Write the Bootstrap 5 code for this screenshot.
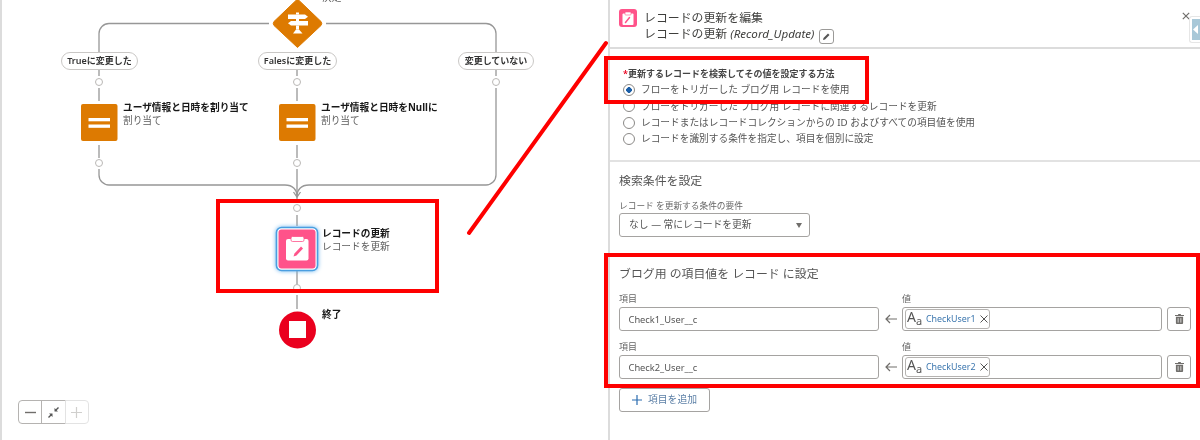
<!DOCTYPE html>
<html lang="ja">
<head>
<meta charset="utf-8">
<title>レコードの更新を編集</title>
<link href="https://cdn.jsdelivr.net/npm/bootstrap@5.3.0/dist/css/bootstrap.min.css" rel="stylesheet">
<style>
html,body{width:1200px;height:440px;overflow:hidden;margin:0;background:#fff}
body{font-family:"Noto Sans","Noto Sans CJK JP",sans-serif;color:#3e3e3c;font-size:9.8px;line-height:1.2}
.page{width:1200px;height:440px;position:relative;filter:blur(.45px)}
.canvas{width:608px;height:440px;position:relative;border-left:2px solid #dcdcdc;flex:none}
.wires{position:absolute;left:-2px;top:0}
.pill{position:absolute;top:52px;height:18px;background:#fff;border:1px solid #c9c7c5;border-radius:9px;font-size:9px;font-weight:600;color:#333;display:flex;align-items:center;justify-content:center;white-space:nowrap}
.nodetext{position:absolute;white-space:nowrap;line-height:13px;font-size:9.7px;color:#5c5c5c}
.nodetext b{display:block;color:#181818;font-weight:700}
.zoombar{position:absolute;left:16px;top:400px;width:71px;height:24px}
.zoombar .btn{width:23.6px;height:24px;padding:0;border-color:#b5b3b1;background:#fff;display:flex;align-items:center;justify-content:center;border-radius:4px}
.zoombar .btn:last-child{border-color:#e3e3e3}
.panel{flex:1;border-left:2px solid #dcdcdc;height:440px;position:relative;min-width:0}
.phead{height:49px;border-bottom:2px solid #dcdcdc;padding:9px 0 0 9px;gap:7px}
.phead .ico{width:18px;height:18px;background:#ff538a;border-radius:3px;flex:none;display:flex;align-items:center;justify-content:center}
.ptitle{font-size:11.9px;line-height:16px;color:#3e3e3c;white-space:nowrap}
.ptitle i{font-size:11.6px}
.editbtn{width:15px;height:15px;padding:0;border:1px solid #9b9a98;border-radius:3px;background:#fff;display:inline-flex;align-items:center;justify-content:center;vertical-align:-3px;margin-left:5px}
.closex{position:absolute;left:572px;top:12px;width:8px;height:8px}
.drawer{position:absolute;left:579px;top:16px;width:13px;height:27px;background:#fff;border:1px solid #e6e6e6;border-right:0;border-radius:3px 0 0 3px;padding:2px 0 2px 2px}
.drawer span{display:flex;height:100%;background:#a8c8d8;align-items:center;padding-left:1px}
.sect1{padding:19px 0 14px 13px;border-bottom:2px solid #e2e2e2;height:113px}
.sect1 .rlabel{font-size:9px;font-weight:600;line-height:12px;color:#444;margin-bottom:2px}
.req{color:#ea001e}
.form-check.rowradio{min-height:0;height:16.3px;padding-left:0;margin:0;display:flex;align-items:center;gap:6px}
.rowradio .form-check-input{float:none;margin:0;width:12px;height:12px;border-color:#8a8886;flex:none}
.rowradio .form-check-input:checked{background-color:#fff;border-color:#8a8886;background-image:radial-gradient(circle,#1b5fa8 0 2.6px,transparent 3px)}
.rowradio .form-check-label{font-size:9.7px;color:#555;white-space:nowrap}
.sect2{padding:10px 9px 0 9px}
.shead{font-size:11.9px;line-height:16px;color:#555}
.slabel{font-size:8.7px;line-height:12px;color:#666;margin:12px 0 1px}
.form-select.picker{width:191px;height:24px;font-size:9.8px;padding:0 0 0 9px;color:#555;border-color:#a5a3a1;border-radius:3px;background-image:linear-gradient(#fff,#fff)}
.pickwrap{position:relative;width:191px}
.pickwrap::after{content:"";position:absolute;left:177px;top:10px;border:3.5px solid transparent;border-top:5px solid #706e6b;border-bottom:0}
.shead.second{margin-top:28px}
.flabel{font-size:9px;line-height:12px;color:#666}
.first-line{margin-top:12px}
.line-gap{margin-top:10px}
.input-gap{margin-top:2px}
.fcell{flex:0 0 260px}
.acell{flex:0 0 23px;display:flex;align-items:center;justify-content:center}
.vcell{flex:1;min-width:0}
.tcell{flex:0 0 24px;margin-left:5px}
.form-control.field{height:24px;font-size:9.3px;padding:0 0 0 8.5px;color:#555;border-color:#a5a3a1;border-radius:3px}
.valbox{height:24px;border:1px solid #a5a3a1;border-radius:3px;padding:1px 0 0 2px;background:#fff}
.chip{height:20px;width:85px;border:1px solid #b5b3b1;border-radius:3px;display:flex;align-items:center;padding-left:1px;background:#fff}
.aa{font-size:14px;color:#555;width:18px;line-height:14px;white-space:nowrap;flex:none}
.aa small{font-size:11px;vertical-align:-3px}
.chip .cname{font-size:8.9px;color:#3b76ae;margin-left:1px;white-space:nowrap}
.chip svg{margin-left:4px;flex:none}
.trashbtn{width:24px;height:24px;padding:0;border-color:#a5a3a1;border-radius:3px;background:#fff;display:flex;align-items:center;justify-content:center}
.addbtn{margin-top:9px;width:91px;height:24px;padding:0;border-color:#a5a3a1;border-radius:3px;background:#fff;font-size:9.8px;color:#5b7fa6;display:flex;align-items:center;justify-content:center;gap:6px}
.redbox{position:absolute;border:4px solid #fe0000;pointer-events:none}
.slash{position:absolute;left:0;top:0;pointer-events:none}
.halo{filter:drop-shadow(0 0 2px #6db5ee)}
</style>
</head>
<body>
<div class="page d-flex">
  <div class="canvas">
    <svg class="wires" width="608" height="440" viewBox="0 0 608 440" fill="none">
      <g stroke="#979797" stroke-width="1.3">
        <path d="M269 23.5H109a10 10 0 0 0-10 10V52M99 70v6M99 88v13M99 145v13M99 169v6a10 10 0 0 0 10 10h176c8 0 12 5 12 11"/>
        <path d="M326 23.5H486a10 10 0 0 1 10 10V52M496 70v6M496 88v87a10 10 0 0 1-10 10H309c-8 0-12 5-12 11"/>
        <path d="M297 70v6M297 88v13M297 145v13M297 169v31M297 215v11M297 271v14M297 295v14"/>
        <path d="M293.500 192l3.500 5 3.500-5"/>
      </g>
      <g fill="#fff" stroke="#b9b7b5" stroke-width="1">
        <circle cx="99" cy="82" r="3.500"/><circle cx="297" cy="82" r="3.500"/><circle cx="496" cy="82" r="3.500"/>
        <circle cx="99" cy="163" r="3.500"/><circle cx="297" cy="163" r="3.500"/>
        <circle cx="297" cy="208" r="3.500"/><circle cx="297" cy="288" r="3.500"/>
      </g>
      <path d="M297.500 -1L321 21.500q1.500 2 0 4L297.500 47.500 274 25.500q-1.500-2 0-4z" fill="#dd7a01" stroke="#dd7a01" stroke-width="1" stroke-linejoin="round"/>
      <g fill="#fff">
        <path d="M288 14.500h17l3 2.200-3 2.200H288z"/>
        <path d="M291 21h17v4.500H291l-3-2.200z"/>
        <rect x="296" y="12.500" width="3" height="2"/><rect x="296" y="19" width="3" height="2"/><rect x="296" y="25.500" width="3" height="4"/>
        <path d="M293 33.500l3-4h3l3.500 4z"/>
      </g>
      <rect x="81" y="104" width="36.500" height="37" rx="2" fill="#dd7a01"/>
      <rect x="88.500" y="118" width="21.500" height="3.300" fill="#fff"/><rect x="88.500" y="124.500" width="21.500" height="3.300" fill="#fff"/>
      <rect x="279" y="104" width="36.500" height="37" rx="2" fill="#dd7a01"/>
      <rect x="286.500" y="118" width="21.500" height="3.300" fill="#fff"/><rect x="286.500" y="124.500" width="21.500" height="3.300" fill="#fff"/>
      <rect class="halo" x="276.500" y="227.500" width="41" height="43" rx="5" fill="#fff" stroke="#4a9ee0" stroke-width="1.600"/>
      <rect x="278.500" y="229.500" width="37" height="39" rx="3" fill="#ff538a"/>
      <rect x="286" y="239" width="22.500" height="21.500" rx="2" fill="#fff"/>
      <rect x="291" y="236.500" width="13" height="5" rx="1.500" fill="#fff" stroke="#ff538a" stroke-width=".8"/>
      <path d="M293.500 256.500l1-3 6.500-7 2 2-6.500 7z" fill="#ff538a"/>
      <ellipse cx="297.500" cy="330" rx="18.500" ry="18.500" fill="#ea001e"/>
      <rect x="289" y="321" width="17" height="17" fill="#fff"/>
    </svg>
    <div class="nodetext" style="left:320px;top:-9px">決定</div>
    <div class="pill" style="left:59px;width:77px">Trueに変更した</div>
    <div class="pill" style="left:256px;width:79px">Falesに変更した</div>
    <div class="pill" style="left:456px;width:76px">変更していない</div>
    <div class="nodetext" style="left:121px;top:101px"><b>ユーザ情報と日時を割り当て</b>割り当て</div>
    <div class="nodetext" style="left:319px;top:101px"><b>ユーザ情報と日時をNullに</b>割り当て</div>
    <div class="nodetext" style="left:320px;top:227px"><b>レコードの更新</b>レコードを更新</div>
    <div class="nodetext" style="left:320px;top:308px"><b>終了</b></div>
    <div class="zoombar btn-group" role="group">
      <button class="btn" type="button"><svg width="11" height="11" viewBox="0 0 11 11"><path d="M0 5.500h11" stroke="#706e6b" stroke-width="1.400"/></svg></button>
      <button class="btn" type="button"><svg width="11" height="11" viewBox="0 0 11 11" fill="#555"><path d="M6.500 1v3.500H10l-1.300-1.300L11 1 10 0 7.800 2.300zM4.500 10V6.500H1l1.300 1.300L0 10l1 1 2.200-2.300z"/></svg></button>
      <button class="btn" type="button"><svg width="11" height="11" viewBox="0 0 11 11"><path d="M0 5.500h11M5.500 0v11" stroke="#d0cfcd" stroke-width="1.200"/></svg></button>
    </div>
  </div>

  <div class="panel">
    <div class="phead d-flex">
      <span class="ico"><svg width="12" height="13" viewBox="0 0 12 13"><rect x=".5" y="1.500" width="11" height="11.500" rx="1" fill="#fff"/><rect x="3" y="0" width="6" height="3" rx=".8" fill="#fff" stroke="#ff538a" stroke-width=".6"/><path d="M3.500 10.500l4-5" stroke="#ff538a" stroke-width="1.500" stroke-linecap="round"/></svg></span>
      <div class="ptitle">レコードの更新を編集<br>レコードの更新 <i>(Record_Update)</i><button class="editbtn" type="button" aria-label="編集"><svg width="9" height="9" viewBox="0 0 9 9"><path d="M1 8l.5-2L6 1.500 7.500 3 3 7.500z" fill="#555"/></svg></button></div>
    </div>
    <svg class="closex" viewBox="0 0 10 10"><path d="M1 1l8 8M9 1l-8 8" stroke="#706e6b" stroke-width="1.500"/></svg>
    <div class="drawer"><span><svg width="5" height="9" viewBox="0 0 5 9"><path d="M5 0v9L0 4.500z" fill="#fff"/></svg></span></div>

    <div class="sect1">
      <div class="rlabel"><span class="req">*</span>更新するレコードを検索してその値を設定する方法</div>
      <div class="form-check rowradio"><input class="form-check-input" type="radio" name="how" id="r1" checked><label class="form-check-label" for="r1">フローをトリガーした ブログ用 レコードを使用</label></div>
      <div class="form-check rowradio"><input class="form-check-input" type="radio" name="how" id="r2"><label class="form-check-label" for="r2">フローをトリガーした ブログ用 レコードに関連するレコードを更新</label></div>
      <div class="form-check rowradio"><input class="form-check-input" type="radio" name="how" id="r3"><label class="form-check-label" for="r3">レコードまたはレコードコレクションからの ID およびすべての項目値を使用</label></div>
      <div class="form-check rowradio"><input class="form-check-input" type="radio" name="how" id="r4"><label class="form-check-label" for="r4">レコードを識別する条件を指定し、項目を個別に設定</label></div>
    </div>

    <div class="sect2">
      <div class="shead">検索条件を設定</div>
      <div class="slabel">レコード を更新する条件の要件</div>
      <div class="pickwrap"><select class="form-select picker" aria-label="条件"><option>なし — 常にレコードを更新</option></select></div>

      <div class="shead second">ブログ用 の項目値を レコード に設定</div>

      <div class="d-flex first-line">
        <div class="fcell"><div class="flabel">項目</div></div><div class="acell"></div><div class="vcell"><div class="flabel">値</div></div><div class="tcell"></div>
      </div>
      <div class="d-flex input-gap">
        <div class="fcell"><input class="form-control field" type="text" value="Check1_User__c" aria-label="項目"></div>
        <div class="acell"><svg width="12" height="10" viewBox="0 0 12 10" fill="none"><path d="M12 5H1M5 1L1 5l4 4" stroke="#706e6b" stroke-width="1.200"/></svg></div>
        <div class="vcell"><div class="valbox"><div class="chip"><span class="aa">A<small>a</small></span><span class="cname">CheckUser1</span><svg width="8" height="8" viewBox="0 0 8 8"><path d="M.5.5l7 7M7.500.5l-7 7" stroke="#555" stroke-width="1"/></svg></div></div></div>
        <div class="tcell"><button class="btn trashbtn" type="button" aria-label="削除"><svg width="9" height="10" viewBox="0 0 10 11" fill="#706e6b"><path d="M3.500 0h3v1H10v1.200H0V1h3.500zM1 3h8v7a1 1 0 0 1-1 1H2a1 1 0 0 1-1-1z"/><path d="M3.500 4.500v5M6.500 4.500v5" stroke="#fff" stroke-width=".8"/></svg></button></div>
      </div>
      <div class="d-flex line-gap">
        <div class="fcell"><div class="flabel">項目</div></div><div class="acell"></div><div class="vcell"><div class="flabel">値</div></div><div class="tcell"></div>
      </div>
      <div class="d-flex input-gap">
        <div class="fcell"><input class="form-control field" type="text" value="Check2_User__c" aria-label="項目"></div>
        <div class="acell"><svg width="12" height="10" viewBox="0 0 12 10" fill="none"><path d="M12 5H1M5 1L1 5l4 4" stroke="#706e6b" stroke-width="1.200"/></svg></div>
        <div class="vcell"><div class="valbox"><div class="chip"><span class="aa">A<small>a</small></span><span class="cname">CheckUser2</span><svg width="8" height="8" viewBox="0 0 8 8"><path d="M.5.5l7 7M7.500.5l-7 7" stroke="#555" stroke-width="1"/></svg></div></div></div>
        <div class="tcell"><button class="btn trashbtn" type="button" aria-label="削除"><svg width="9" height="10" viewBox="0 0 10 11" fill="#706e6b"><path d="M3.500 0h3v1H10v1.200H0V1h3.500zM1 3h8v7a1 1 0 0 1-1 1H2a1 1 0 0 1-1-1z"/><path d="M3.500 4.500v5M6.500 4.500v5" stroke="#fff" stroke-width=".8"/></svg></button></div>
      </div>
      <button class="btn addbtn" type="button"><svg width="10" height="10" viewBox="0 0 10 10"><path d="M0 5h10M5 0v10" stroke="#2a6cb0" stroke-width="1.200"/></svg>項目を追加</button>
    </div>
  </div>

  <div class="redbox" style="left:216px;top:199px;width:223px;height:94px"></div>
  <div class="redbox" style="left:604px;top:56px;width:265px;height:48px"></div>
  <div class="redbox" style="left:604px;top:253px;width:596px;height:135px"></div>
  <svg class="slash" width="1200" height="440" viewBox="0 0 1200 440"><path d="M469 233L606 43" stroke="#fe0000" stroke-width="4" stroke-linecap="round"/></svg>
</div>
<script src="https://cdn.jsdelivr.net/npm/bootstrap@5.3.0/dist/js/bootstrap.bundle.min.js"></script>
</body>
</html>
